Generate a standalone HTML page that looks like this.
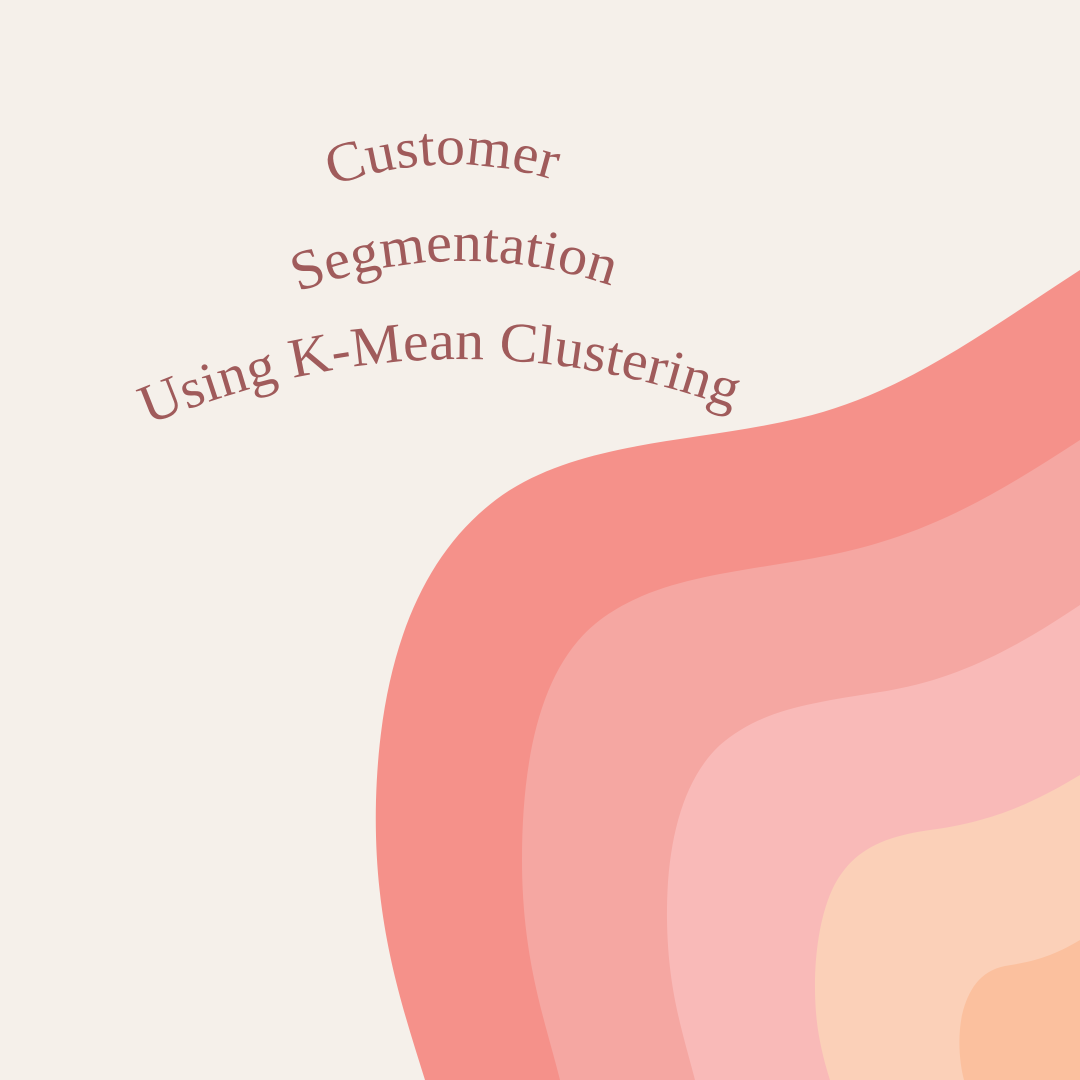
<!DOCTYPE html>
<html><head><meta charset="utf-8"><style>
html,body{margin:0;padding:0;background:#f5f0ea;}
svg{display:block}
</style></head><body>
<svg width="1080" height="1080" viewBox="0 0 1080 1080" xmlns="http://www.w3.org/2000/svg">
<rect width="1080" height="1080" fill="#f5f0ea"/>
<path d="M1080,270 C980,335 900,395 800,418 C700,442 590,440 510,490 C420,548 380,660 376,800 C373,920 400,1000 425,1080 L1080,1080 Z" fill="#f5918a"/>
<path d="M1080,440 C1000,492 930,535 830,555 C740,573 660,575 600,620 C540,665 522,760 522,860 C522,960 545,1020 560,1080 L1080,1080 Z" fill="#f5a7a2"/>
<path d="M1080,605 C1020,645 960,680 880,692 C810,703 760,710 720,745 C680,782 666,850 667,920 C668,990 682,1030 695,1080 L1080,1080 Z" fill="#f9bab8"/>
<path d="M1080,775 C1030,805 990,822 930,830 C880,837 850,852 832,890 C814,930 812,990 818,1030 C822,1055 827,1070 830,1080 L1080,1080 Z" fill="#fbd0b8"/>
<path d="M1080,940 C1050,958 1030,962 1005,966 C980,971 968,990 962,1015 C957,1040 960,1065 964,1080 L1080,1080 Z" fill="#fbc09e"/>
<defs>
<path id="a1" d="M332,186 Q445,145 560,182"/>
<path id="a2" d="M298,292 Q458,232 618,288"/>
<path id="a3" d="M148,425 Q445,300 742,412"/>
</defs>
<g fill="#a05b5b" font-family="'Liberation Serif',serif" font-size="56">
<text><textPath href="#a1" textLength="226" lengthAdjust="spacingAndGlyphs">Customer</textPath></text>
<text><textPath href="#a2" textLength="320" lengthAdjust="spacingAndGlyphs">Segmentation</textPath></text>
<text><textPath href="#a3" textLength="600" lengthAdjust="spacingAndGlyphs">Using K-Mean Clustering</textPath></text>
</g>
</svg>
</body></html>
